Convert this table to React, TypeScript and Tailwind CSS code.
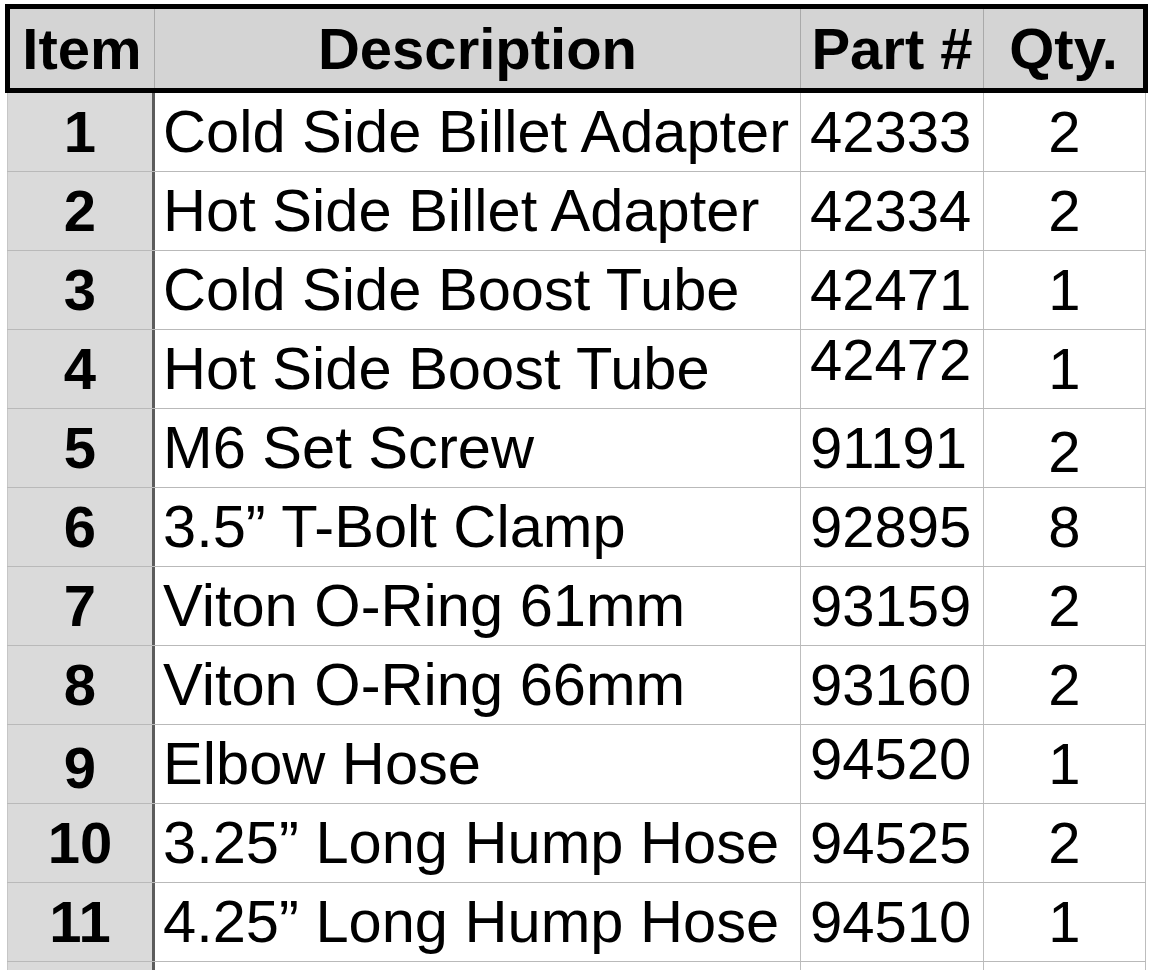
const rows = [
  { item: '1', desc: 'Cold Side Billet Adapter', part: '42333', qty: '2' },
  { item: '2', desc: 'Hot Side Billet Adapter', part: '42334', qty: '2' },
  { item: '3', desc: 'Cold Side Boost Tube', part: '42471', qty: '1' },
  { item: '4', desc: 'Hot Side Boost Tube', part: '42472', qty: '1', partCls: 'pb-[18px]' },
  { item: '5', desc: 'M6 Set Screw', part: '91191', qty: '2', qtyCls: 'pt-[8px]' },
  { item: '6', desc: '3.5\u201D T-Bolt Clamp', part: '92895', qty: '8' },
  { item: '7', desc: 'Viton O-Ring 61mm', part: '93159', qty: '2' },
  { item: '8', desc: 'Viton O-Ring 66mm', part: '93160', qty: '2' },
  { item: '9', desc: 'Elbow Hose', part: '94520', qty: '1', partCls: 'pb-[10px]', itemCls: 'pt-[8px]' },
  { item: '10', desc: '3.25\u201D Long Hump Hose', part: '94525', qty: '2' },
  { item: '11', desc: '4.25\u201D Long Hump Hose', part: '94510', qty: '1' },
];

type Row = {
  item: string;
  desc: string;
  part: string;
  qty: string;
  partCls?: string;
  qtyCls?: string;
  itemCls?: string;
};

function BodyRow({ r }: { r: Row }) {
  return (
    <div className="flex h-[79px] border-b border-[#b9b9b9]">
      <div
        className={`flex w-[148px] items-center justify-center border-l border-r-[3px] border-l-[#c6c6c6] border-r-[#5c5c5c] bg-[#dadada] text-[58px] font-bold ${r.itemCls ?? ''}`}
      >
        {r.item}
      </div>
      <div className="flex w-[646px] items-center border-r border-[#bdbdbd] pl-[8px] text-[59.6px] whitespace-nowrap">
        {r.desc}
      </div>
      <div className={`flex w-[183px] items-center border-r border-[#bdbdbd] pl-[9px] text-[58px] ${r.partCls ?? ''}`}>
        {r.part}
      </div>
      <div className={`flex w-[162px] items-center justify-center border-r border-[#bdbdbd] text-[58px] ${r.qtyCls ?? ''}`}>
        {r.qty}
      </div>
    </div>
  );
}

export default function App() {
  return (
    <div className="h-[970px] w-[1154px] overflow-hidden bg-white pt-[4px] pl-[5px] font-['Liberation_Sans',Arial,sans-serif] text-black leading-none">
      {/* header band */}
      <div className="flex h-[89px] w-[1143px] border-[5px] border-black bg-[#d4d4d4] text-[58px] font-bold">
        <div className="flex w-[144px] items-center justify-center">Item</div>
        <div className="flex w-[646px] items-center justify-center border-l border-[#a9a9a9]">Description</div>
        <div className="flex w-[183px] items-center justify-center border-l border-[#a9a9a9]">Part #</div>
        <div className="flex w-[160px] items-center justify-center border-l border-[#a9a9a9]">Qty.</div>
      </div>

      <div className="ml-[2px] w-[1139px]">
        {rows.map((r) => (
          <BodyRow key={r.item} r={r} />
        ))}
        <BodyRow r={{ item: '', desc: '', part: '', qty: '' }} />
      </div>
    </div>
  );
}
